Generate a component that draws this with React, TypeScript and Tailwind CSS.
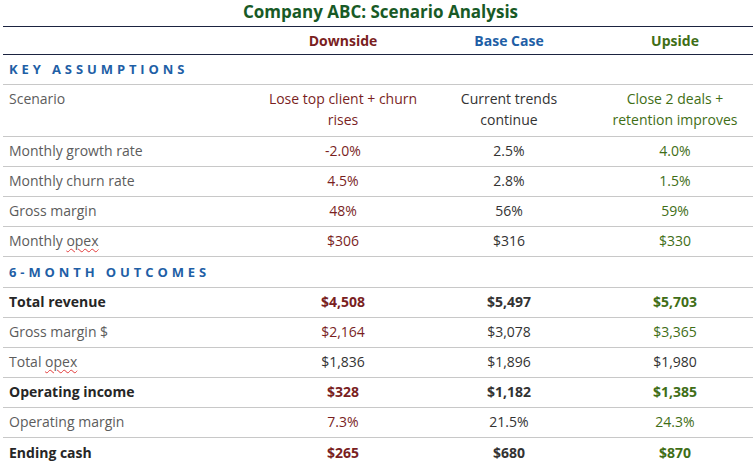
import React from "react";

type Tone = "down" | "base" | "up";

const toneClass: Record<Tone, string> = {
  down: "text-[#7a1f1f]",
  base: "text-[#333333]",
  up: "text-[#3f6e17]",
};

type Row = {
  label: React.ReactNode;
  values: [string, string, string];
  bold?: boolean;
  // which columns keep their scenario colour; others fall back to neutral
  tones?: [Tone, Tone, Tone];
};

const Opex = () => (
  <span className="underline decoration-wavy decoration-[#e23b3b] decoration-1 underline-offset-2">opex</span>
);

const assumptions: Row[] = [
  { label: "Monthly growth rate", values: ["-2.0%", "2.5%", "4.0%"] },
  { label: "Monthly churn rate", values: ["4.5%", "2.8%", "1.5%"] },
  { label: "Gross margin", values: ["48%", "56%", "59%"] },
  { label: <>Monthly <Opex /></>, values: ["$306", "$316", "$330"] },
];

const outcomes: Row[] = [
  { label: "Total revenue", values: ["$4,508", "$5,497", "$5,703"], bold: true },
  { label: "Gross margin $", values: ["$2,164", "$3,078", "$3,365"] },
  { label: <>Total <Opex /></>, values: ["$1,836", "$1,896", "$1,980"], tones: ["base", "base", "base"] },
  { label: "Operating income", values: ["$328", "$1,182", "$1,385"], bold: true },
  { label: "Operating margin", values: ["7.3%", "21.5%", "24.3%"] },
  { label: "Ending cash", values: ["$265", "$680", "$870"], bold: true },
];

const grid = "grid grid-cols-[257px_166px_166px_166px]";

function SectionHeader({ children, h }: { children: string; h: string }) {
  return (
    <div className={`${grid} ${h} items-center border-b border-[#c8c8c8]`}>
      <div className="pl-[6px] text-[13px] font-bold tracking-[0.3em] text-[#1f5fa6]">{children}</div>
    </div>
  );
}

function DataRow({ row, last }: { row: Row; last?: boolean }) {
  const tones = row.tones ?? ["down", "base", "up"];
  return (
    <div className={`${grid} h-[30px] items-center pb-[2px] ${last ? "" : "border-b border-[#c8c8c8]"}`}>
      <div className={`pl-[6px] ${row.bold ? "font-bold text-[#262626]" : "text-[#5c5c5c]"}`}>{row.label}</div>
      {row.values.map((v, i) => (
        <div key={i} className={`text-center ${row.bold ? "font-bold" : ""} ${toneClass[tones[i]]}`}>
          {v}
        </div>
      ))}
    </div>
  );
}

export default function App() {
  return (
    <div
      className="h-[464px] w-[753px] overflow-hidden bg-white text-[14px] leading-[21px]"
      style={{ fontFamily: '"Open Sans", "Liberation Sans", sans-serif' }}
    >
      <div className="ml-[3px] w-[755px]">
        <div className="flex h-[26px] items-center justify-center pb-[3px] text-[17px] font-bold text-[#185a26]">
          Company ABC: Scenario Analysis
        </div>
        <div className={`${grid} h-[29px] items-center border-y-[1.5px] border-[#1b2340] font-bold`}>
          <div />
          <div className="text-center text-[#7a1f1f]">Downside</div>
          <div className="text-center text-[#1f5fa6]">Base Case</div>
          <div className="text-center text-[#3f6e17]">Upside</div>
        </div>
        <SectionHeader h="h-[30px]">KEY ASSUMPTIONS</SectionHeader>
        <div className={`${grid} h-[52px] border-b border-[#c8c8c8] pt-[3px]`}>
          <div className="pl-[6px] text-[#5c5c5c]">Scenario</div>
          <div className="px-2 text-center text-[#7a1f1f]">Lose top client + churn rises</div>
          <div className="px-2 text-center text-[#333333]">Current trends continue</div>
          <div className="px-2 text-center text-[#3f6e17]">Close 2 deals + retention improves</div>
        </div>
        {assumptions.map((r, i) => (
          <DataRow key={i} row={r} />
        ))}
        <SectionHeader h="h-[31px]">6-MONTH OUTCOMES</SectionHeader>
        {outcomes.map((r, i) => (
          <DataRow key={i} row={r} last={i === outcomes.length - 1} />
        ))}
      </div>
    </div>
  );
}
